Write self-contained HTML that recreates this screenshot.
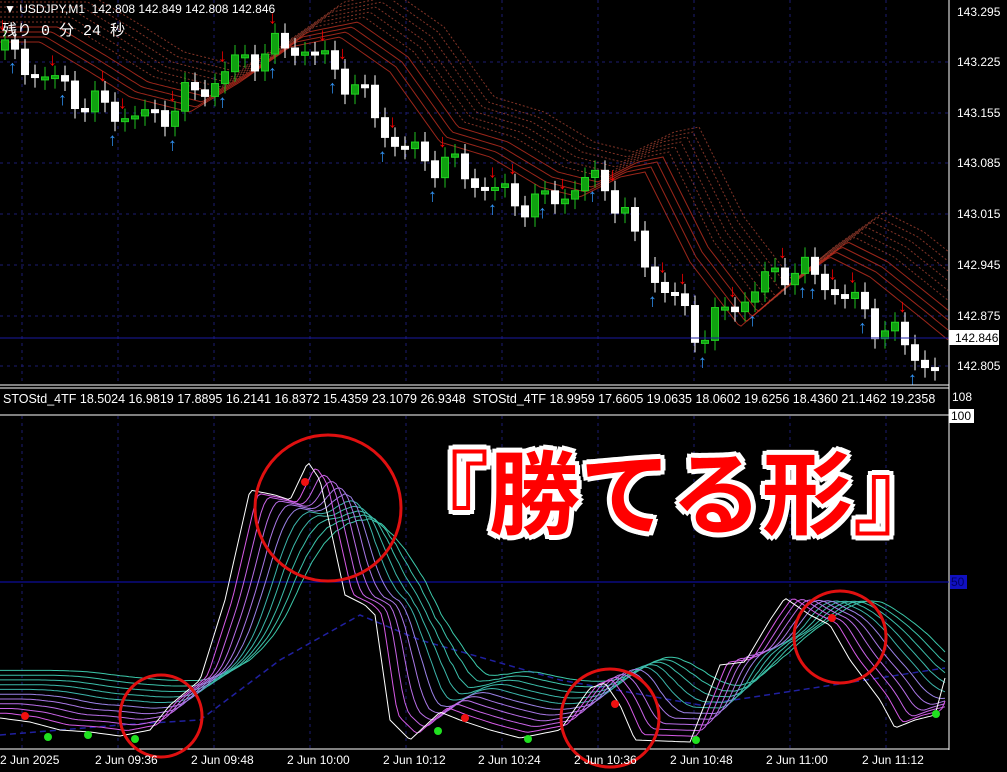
<!DOCTYPE html><html><head><meta charset="utf-8"><style>
body{margin:0;background:#000;width:1007px;height:772px;overflow:hidden;position:relative;font-family:"Liberation Sans",sans-serif}
.t{position:absolute;color:#fff;font-size:12px;white-space:nowrap}
.p{position:absolute;left:957px;color:#fff;font-size:12px}
</style></head><body>
<svg id="s" width="1007" height="772" style="position:absolute;left:0;top:0">
<g stroke="#1c1c70" stroke-dasharray="3,4" stroke-width="1" fill="none" id="grid"></g>
<g id="bands"></g><g id="cand"></g>
<line x1="0" y1="338" x2="949" y2="338" stroke="#1a1aa0"/>
<line x1="949" y1="0" x2="949" y2="750" stroke="#fff"/>
<line x1="0" y1="385" x2="949" y2="385" stroke="#fff"/>
<line x1="0" y1="388" x2="949" y2="388" stroke="#fff"/>
<line x1="0" y1="415" x2="949" y2="415" stroke="#fff"/>
<line x1="0" y1="582" x2="949" y2="582" stroke="#1010c0"/>
<line x1="0" y1="749" x2="949" y2="749" stroke="#fff"/>
<g id="ind"></g>
<g fill="none" stroke="#e01010" stroke-width="3">
<circle cx="328" cy="508" r="73"/><circle cx="161" cy="716" r="41"/><circle cx="610" cy="718" r="49"/><circle cx="840" cy="637" r="46"/></g>
<rect x="949" y="330" width="50" height="15" fill="#fff"/>
<rect x="949" y="409" width="25" height="14" fill="#fff"/>
<rect x="950" y="575" width="17" height="14" fill="#1010c0"/>
</svg>
<div class="t" style="left:4px;top:2px;font-size:12px">▼ USDJPY,M1 &nbsp;142.808 142.849 142.808 142.846</div>
<div class="t" style="left:2px;top:19px;font-size:15px;font-family:'Liberation Mono','Noto Sans CJK JP',monospace">残り 0 分 24 秒</div>
<div class="p" style="top:5px">143.295</div><div class="p" style="top:55px">143.225</div><div class="p" style="top:106px">143.155</div><div class="p" style="top:156px">143.085</div><div class="p" style="top:207px">143.015</div><div class="p" style="top:258px">142.945</div><div class="p" style="top:309px">142.875</div><div class="p" style="top:331px;left:955px;color:#000">142.846</div><div class="p" style="top:359px">142.805</div>
<div style="position:absolute;left:0;top:388px;width:949px;height:26px;overflow:hidden"><div class="t" style="left:3px;top:4px;font-size:12.5px">STOStd_4TF 18.5024 16.9819 17.8895 16.2141 16.8372 15.4359 23.1079 26.9348 &nbsp;STOStd_4TF 18.9959 17.6605 19.0635 18.0602 19.6256 18.4360 21.1462 19.2358</div></div>
<div class="p" style="top:390px;left:952px">108</div><div class="p" style="top:409px;left:951px;color:#000">100</div><div class="p" style="top:575px;left:951px;color:#000066">50</div>
<div class="t" style="left:398px;top:422px;font-size:91px;font-weight:bold;color:#f00;font-family:'Liberation Sans','Noto Sans CJK JP',sans-serif;text-shadow:4px 4px 0 #fff,-4px -4px 0 #fff,4px -4px 0 #fff,-4px 4px 0 #fff,5px 0 0 #fff,-5px 0 0 #fff,0 5px 0 #fff,0 -5px 0 #fff">『勝てる形』</div>
<div class="t" style="left:0;top:753px">2 Jun 2025</div>
<div class="t" style="left:95px;top:753px">2 Jun 09:36</div><div class="t" style="left:191px;top:753px">2 Jun 09:48</div><div class="t" style="left:287px;top:753px">2 Jun 10:00</div><div class="t" style="left:383px;top:753px">2 Jun 10:12</div><div class="t" style="left:478px;top:753px">2 Jun 10:24</div><div class="t" style="left:574px;top:753px">2 Jun 10:36</div><div class="t" style="left:670px;top:753px">2 Jun 10:48</div><div class="t" style="left:766px;top:753px">2 Jun 11:00</div><div class="t" style="left:862px;top:753px">2 Jun 11:12</div>
<script>
(function(){
var NS="http://www.w3.org/2000/svg";function el(p,t,a){var e=document.createElementNS(NS,t);for(var k in a)e.setAttribute(k,a[k]);p.appendChild(e);return e}
function interp(k,x){for(var i=1;i<k.length;i++)if(x<=k[i][0]){var a=k[i-1],b=k[i];return a[1]+(b[1]-a[1])*(x-a[0])/(b[0]-a[0])}return k[k.length-1][1]}
var g=document.getElementById('grid');
[22,118,214,310,406,502,598,694,790,886].forEach(function(x){el(g,'line',{x1:x,y1:0,x2:x,y2:383});el(g,'line',{x1:x,y1:416,x2:x,y2:748})});
[62,113,163,214,265,316,366].forEach(function(y){el(g,'line',{x1:0,y1:y,x2:949,y2:y})});
var P=[[0,50],[50,80],[90,105],[150,120],[200,90],[250,55],[300,45],[350,80],[400,150],[450,165],[500,195],[540,205],[580,185],[605,180],[650,270],[700,335],[740,300],[790,265],[830,285],[880,325],[935,370],[945,325]];
var b=document.getElementById('bands');
for(var j=0;j<10;j++){var d='';for(var x=0;x<=949;x+=3){var y=interp(P,Math.max(0,x-40-j*6))-8-j*5;d+=(x?'L':'M')+x+' '+y.toFixed(1)}el(b,'path',{d:d,fill:'none',stroke:j<4?'#c03020':'#a04030','stroke-width':1,'stroke-dasharray':j<4?'':'2,2',opacity:.8})}
var c=document.getElementById('cand');var prev=interp(P,0);
for(var x=5;x<945;x+=10){var cl=interp(P,x)+Math.sin(x*0.77)*12+Math.sin(x*2.3)*6;var op=prev;var up=cl<op;var tp=Math.min(op,cl),h=Math.max(3,Math.abs(cl-op));
el(c,'line',{x1:x,y1:tp-10,x2:x,y2:tp+h+10,stroke:up?'#20c020':'#fff'});el(c,'rect',{x:x-3.5,y:tp,width:7,height:h,fill:up?'#10a010':'#fff',stroke:up?'#20d020':'#fff'});
if(Math.sin(x*0.37)>0.75)el(c,'text',{x:x-7,y:tp-10,fill:'#f00','font-size':18,'font-weight':'bold'}).textContent='↓';
if(Math.sin(x*0.51)>0.8)el(c,'text',{x:x-7,y:tp+h+24,fill:'#3090f0','font-size':18,'font-weight':'bold'}).textContent='↑';prev=cl}
var W=[[0,718],[30,722],[60,730],[90,732],[120,736],[150,730],[170,705],[200,680],[225,600],[250,490],[275,495],[290,500],[308,462],[320,480],[345,595],[365,605],[375,615],[390,720],[410,740],[440,712],[460,720],[490,730],[520,738],[560,730],[590,688],[605,683],[620,705],[635,740],[690,742],[720,665],[745,662],[770,620],[785,598],[810,615],[830,625],[850,660],[880,700],[895,728],[915,720],[935,715],[945,678]];
var ind=document.getElementById('ind');
el(ind,'path',{d:'M0 735 L120 725 L200 720 L280 660 L360 615 L420 640 L560 680 L700 705 L800 690 L945 668',fill:'none',stroke:'#2020a0','stroke-dasharray':'6,4','stroke-width':1.5});
for(var j=10;j>=0;j--){var d='';for(var x=0;x<=945;x+=3){var s=0;for(var k=0;k<5;k++)s+=interp(W,Math.max(0,x-j*5-k*j*1.2));var y=s/5;y=582+(y-582)*(1-j*0.035);d+=(x?'L':'M')+x+' '+y.toFixed(1)}
var col=j==0?'#fff':(j<6?'rgb('+(230-j*15)+','+(80+j*10)+',230)':'rgb(60,'+(150+j*5)+',170)');el(ind,'path',{d:d,fill:'none',stroke:col,'stroke-width':1})}
[[25,716],[305,482],[465,718],[615,704],[832,618]].forEach(function(p){el(ind,'circle',{cx:p[0],cy:p[1],r:4,fill:'#f01010'})});
[[48,737],[88,735],[135,739],[438,731],[528,739],[696,740],[936,714]].forEach(function(p){el(ind,'circle',{cx:p[0],cy:p[1],r:4,fill:'#20e020'})});
})();
</script>
</body></html>
